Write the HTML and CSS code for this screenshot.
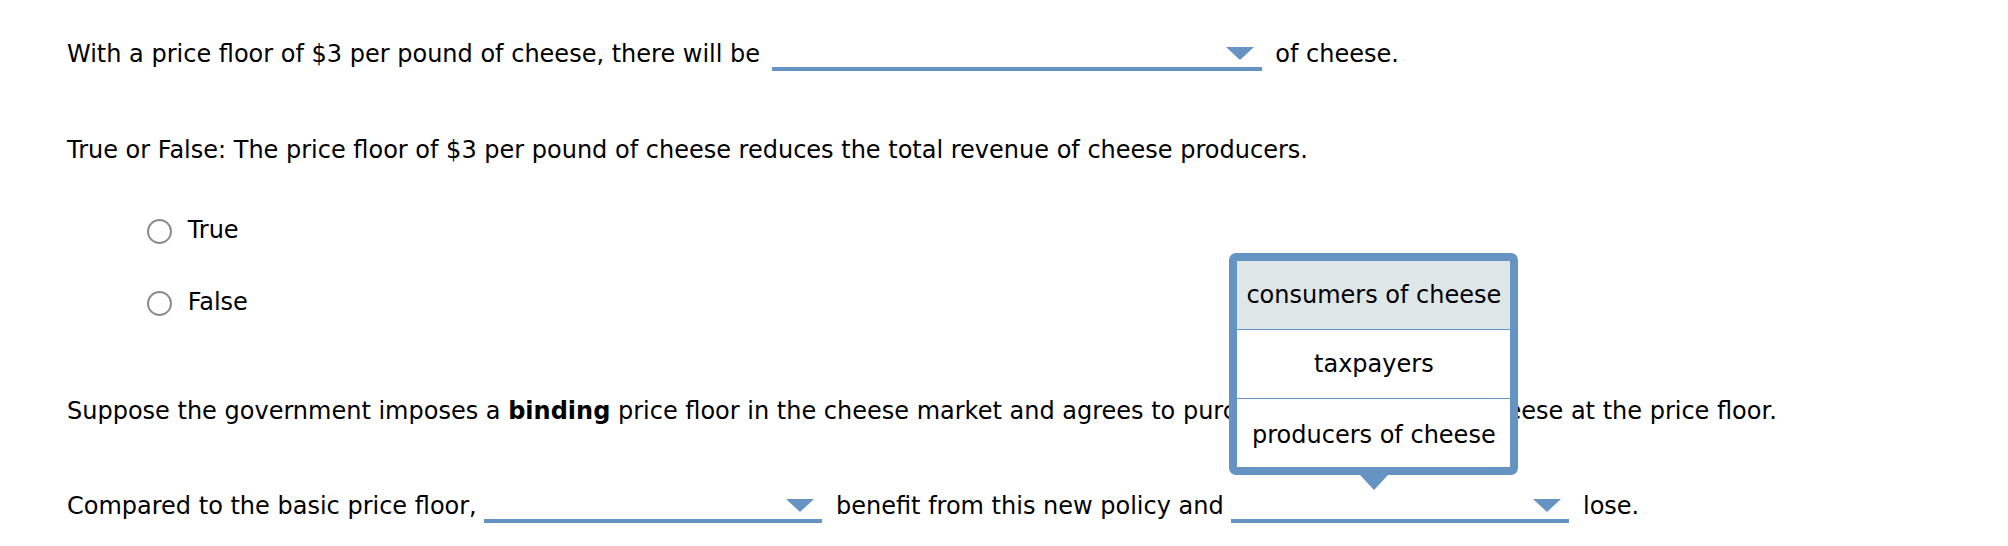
FILE: index.html
```html
<!DOCTYPE html>
<html lang="en">
<head>
    <meta charset="UTF-8">
    <meta name="viewport" content="width=device-width, initial-scale=1.0">
    <title>Price Floor Question</title>
    <link rel="stylesheet" href="styles.css">
</head>
<body>
    <div class="question">
        <p class="line line-first">
            With a price floor of $3 per pound of cheese, there will be
            <span class="dropdown dropdown-wide">
                <svg class="caret" viewBox="0 0 28 13"><polygon points="0,0 28,0 14,13"/></svg>
            </span>
            of cheese.
        </p>

        <p class="line line-tf">True or False: The price floor of $3 per pound of cheese reduces the total revenue of cheese producers.</p>

        <div class="choices">
            <label class="choice choice-true"><input type="radio" name="tf" class="radio"> True</label>
            <label class="choice choice-false"><input type="radio" name="tf" class="radio"> False</label>
        </div>

        <p class="line line-suppose">Suppose the government imposes a <b>binding</b> price floor in the cheese market and agrees to purchase any surplus of cheese at the price floor.</p>

        <p class="line line-last">
            Compared to the basic price floor,
            <span class="dropdown">
                <svg class="caret" viewBox="0 0 28 13"><polygon points="0,0 28,0 14,13"/></svg>
            </span>
            benefit from this new policy and
            <span class="dropdown open">
                <svg class="caret" viewBox="0 0 28 13"><polygon points="0,0 28,0 14,13"/></svg>
                <span class="menu">
                    <span class="menu-item selected">consumers of cheese</span>
                    <span class="menu-item">taxpayers</span>
                    <span class="menu-item">producers of cheese</span>
                </span>
            </span>
            lose.
        </p>
    </div>
</body>
</html>
```

FILE: styles.css
```css
* {
    box-sizing: border-box;
}

body {
    margin: 0;
    background: #fff;
    color: #000;
    font-family: "DejaVu Sans", Verdana, sans-serif;
    font-size: 24px;
    line-height: 28px;
}

.question {
    padding: 40px 0 0 67px;
}

.line {
    margin: 0;
    white-space: nowrap;
}

.line-tf {
    margin-top: 65px;
}

.choices {
    margin-top: 52px;
    padding-left: 80px;
}

.choice {
    display: block;
}

.choice-false {
    margin-top: 44px;
}

.radio {
    appearance: none;
    -webkit-appearance: none;
    display: inline-block;
    width: 25px;
    height: 25px;
    margin: 0 8px 0 0;
    border: 2px solid #8c8c8c;
    border-radius: 50%;
    background: #fff;
    vertical-align: middle;
}

.line-suppose {
    margin-top: 81px;
}

.line-last {
    margin-top: 67px;
}

/* dropdown blanks */
.dropdown {
    position: relative;
    display: inline-block;
    width: 338px;
    height: 30px;
    margin-right: 6px;
    border-bottom: 4px solid #6594c3;
    vertical-align: -9px;
}

.dropdown-wide {
    width: 490px;
    margin-left: 4px;
}

.caret {
    position: absolute;
    top: 6px;
    right: 8px;
    width: 28px;
    height: 13px;
    fill: #6594c3;
}

/* open menu */
.menu {
    position: absolute;
    left: -2px;
    bottom: 44px;
    z-index: 2;
    display: flex;
    flex-direction: column;
    width: 289px;
    border: 8px solid #6594c3;
    border-radius: 7px;
    background: #fff;
}

.menu::after {
    content: "";
    position: absolute;
    left: 50%;
    top: calc(100% + 8px);
    margin-left: -14px;
    border-left: 14px solid transparent;
    border-right: 14px solid transparent;
    border-top: 15px solid #6594c3;
}

.menu-item {
    display: flex;
    align-items: center;
    justify-content: center;
    height: 68px;
    text-align: center;
}

.menu-item + .menu-item {
    height: 69px;
    border-top: 1px solid #6594c3;
}

.menu-item:last-child {
    padding-top: 4px;
}

.menu-item.selected {
    background: #dfe6e8;
}
```
